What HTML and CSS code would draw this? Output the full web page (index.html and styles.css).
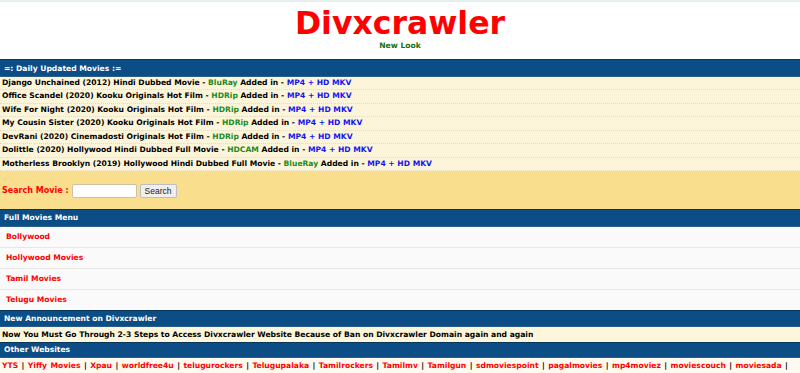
FILE: index.html
```html
<!DOCTYPE html>
<html>
<head>
<meta charset="utf-8">
<link rel="stylesheet" href="styles.css">
</head>
<body>
<div class="header">
  <div class="title">Divxcrawler</div>
  <div class="subtitle">New Look</div>
</div>

<div class="bar bar-daily">=: Daily Updated Movies :=</div>
<div class="rows">
  <div class="row">Django Unchained (2012) Hindi Dubbed Movie - <span class="g">BluRay</span> Added in - <span class="b">MP4 + HD MKV</span></div>
  <div class="row">Office Scandel (2020) Kooku Originals Hot Film - <span class="g">HDRip</span> Added in - <span class="b">MP4 + HD MKV</span></div>
  <div class="row">Wife For Night (2020) Kooku Originals Hot Film - <span class="g">HDRip</span> Added in - <span class="b">MP4 + HD MKV</span></div>
  <div class="row">My Cousin Sister (2020) Kooku Originals Hot Film - <span class="g">HDRip</span> Added in - <span class="b">MP4 + HD MKV</span></div>
  <div class="row">DevRani (2020) Cinemadosti Originals Hot Film - <span class="g">HDRip</span> Added in - <span class="b">MP4 + HD MKV</span></div>
  <div class="row">Dolittle (2020) Hollywood Hindi Dubbed Full Movie - <span class="g">HDCAM</span> Added in - <span class="b">MP4 + HD MKV</span></div>
  <div class="row">Motherless Brooklyn (2019) Hollywood Hindi Dubbed Full Movie - <span class="g">BlueRay</span> Added in - <span class="b">MP4 + HD MKV</span></div>
</div>

<div class="search">
  <span class="search-label">Search Movie :</span>
  <input class="search-input" type="text">
  <button class="search-btn">Search</button>
</div>

<div class="bar bar-menu">Full Movies Menu</div>
<div class="menu">
  <div class="menu-item">Bollywood</div>
  <div class="menu-item">Hollywood Movies</div>
  <div class="menu-item">Tamil Movies</div>
  <div class="menu-item">Telugu Movies</div>
</div>

<div class="bar bar-ann">New Announcement on Divxcrawler</div>
<div class="ann">Now You Must Go Through 2-3 Steps to Access Divxcrawler Website Because of Ban on Divxcrawler Domain again and again</div>

<div class="bar bar-other">Other Websites</div>
<div class="links">
  <span class="lk">YTS</span> | <span class="lk">Yiffy Movies</span> | <span class="lk">Xpau</span> | <span class="lk">worldfree4u</span> | <span class="lk">telugurockers</span> | <span class="lk">Telugupalaka</span> | <span class="lk">Tamilrockers</span> | <span class="lk">Tamilmv</span> | <span class="lk">Tamilgun</span> | <span class="lk">sdmoviespoint</span> | <span class="lk">pagalmovies</span> | <span class="lk">mp4moviez</span> | <span class="lk">moviescouch</span> | <span class="lk">moviesada</span> |
</div>
</body>
</html>
```

FILE: styles.css
```css
html, body {
  margin: 0;
  padding: 0;
  background: #ffffff;
}
body {
  font-family: "DejaVu Sans", Verdana, sans-serif;
  font-weight: bold;
  font-size: 7.6px;
  color: #000;
  overflow: hidden;
}
.header {
  border-top: 2px solid #e6eeee;
  height: 59px;
  box-sizing: border-box;
  padding-top: 3px;
  text-align: center;
}
.title {
  font-size: 31.5px;
  line-height: 36px;
  color: #ff0000;
}
.subtitle {
  font-size: 7.6px;
  line-height: 10px;
  color: #107010;
}
.bar {
  background: #0b4d84;
  color: #fff;
  padding-left: 4px;
  border-top: 1px solid #07365e;
  border-bottom: 1px solid #2a5f8a;
  display: flex;
  align-items: center;
  box-sizing: border-box;
}
.bar-daily { height: 18px; }
.bar-menu { height: 18px; }
.bar-ann { height: 17px; }
.bar-other { height: 16px; }
.rows {
  background: #fdf5d9;
}
.row {
  height: 13.43px;
  line-height: 12.43px;
  box-sizing: border-box;
  padding-left: 2px;
  border-bottom: 1px dotted #e4dcbd;
  white-space: nowrap;
}
.g { color: #1e8a1e; }
.b { color: #1414f5; }
.search {
  background: #f9de8e;
  height: 38px;
  display: flex;
  align-items: center;
  gap: 3px;
  padding-left: 2px;
  padding-top: 2px;
  box-sizing: border-box;
}
.search-label {
  color: #ff0000;
  font-size: 8px;
}
.search-input {
  width: 65px;
  height: 14px;
  box-sizing: border-box;
  border: 1px solid #c9c2a8;
  border-radius: 2px;
  background: #fff;
  padding: 0;
  margin: 0;
}
.search-btn {
  width: 37px;
  height: 14px;
  box-sizing: border-box;
  margin: 0;
  padding: 0;
  font-family: "Liberation Sans", Arial, sans-serif;
  font-weight: normal;
  font-size: 8.5px;
  color: #222;
  background: #efefef;
  border: 1px solid #bdbdbd;
  border-radius: 2px;
}
.menu {
  background: #fafafa;
}
.menu-item {
  height: 21px;
  box-sizing: border-box;
  border-top: 1px solid #e8e6e6;
  padding-left: 6px;
  display: flex;
  align-items: center;
  color: #ff0000;
}
.menu-item:first-child {
  height: 20px;
  border-top: none;
}
.ann {
  background: #fdf6da;
  height: 15px;
  line-height: 15px;
  padding-left: 2px;
  white-space: nowrap;
}
.links {
  background: #fffaf0;
  height: 20px;
  line-height: 15px;
  padding-left: 2px;
  white-space: nowrap;
  word-spacing: 0.8px;
  border-bottom: 1px dotted #e6cccc;
}
.lk { color: #ff0000; }
```
